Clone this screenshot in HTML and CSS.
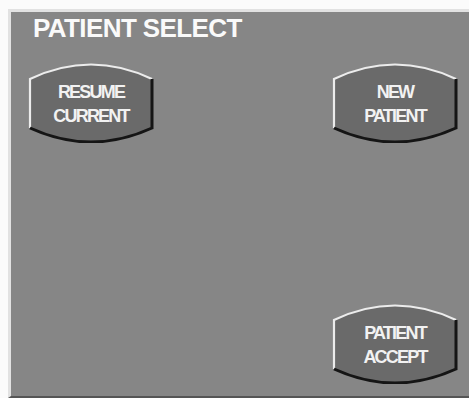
FILE: index.html
```html
<!DOCTYPE html>
<html>
<head>
<meta charset="utf-8">
<link rel="stylesheet" href="styles.css">
</head>
<body>
<div class="frame">
  <div class="panel">
    <h1 class="title">PATIENT SELECT</h1>
    <div class="row">
      <button class="btn" type="button">
        <svg class="btn-shape" viewBox="0 0 126 80" width="126" height="80">
          <path d="M2,16 Q63,-13 124,16 L124,65 Q63,93 2,65 Z" fill="#6a6a6a"/>
          <path d="M2,65 L2,16 Q63,-13 124,16" fill="none" stroke="#ececec" stroke-width="2.2"/>
          <path d="M124,16 L124,65 Q63,93 2,65" fill="none" stroke="#151515" stroke-width="3"/>
        </svg>
        <span class="btn-label">RESUME<br>CURRENT</span>
      </button>
      <button class="btn" type="button">
        <svg class="btn-shape" viewBox="0 0 126 80" width="126" height="80">
          <path d="M2,16 Q63,-13 124,16 L124,65 Q63,93 2,65 Z" fill="#6a6a6a"/>
          <path d="M2,65 L2,16 Q63,-13 124,16" fill="none" stroke="#ececec" stroke-width="2.2"/>
          <path d="M124,16 L124,65 Q63,93 2,65" fill="none" stroke="#151515" stroke-width="3"/>
        </svg>
        <span class="btn-label">NEW<br>PATIENT</span>
      </button>
    </div>
    <div class="bottom">
      <button class="btn" type="button">
        <svg class="btn-shape" viewBox="0 0 126 80" width="126" height="80">
          <path d="M2,16 Q63,-13 124,16 L124,65 Q63,93 2,65 Z" fill="#6a6a6a"/>
          <path d="M2,65 L2,16 Q63,-13 124,16" fill="none" stroke="#ececec" stroke-width="2.2"/>
          <path d="M124,16 L124,65 Q63,93 2,65" fill="none" stroke="#151515" stroke-width="3"/>
        </svg>
        <span class="btn-label">PATIENT<br>ACCEPT</span>
      </button>
    </div>
  </div>
</div>
</body>
</html>
```
FILE: styles.css
```css
html, body {
  margin: 0;
  padding: 0;
  background: #fbfbfb;
}
body {
  width: 469px;
  height: 398px;
  overflow: hidden;
  font-family: "Liberation Sans", Arial, sans-serif;
}
.frame {
  padding: 9px 0 0 8px;
  height: 389px;
}
.panel {
  box-sizing: border-box;
  height: 389px;
  border-top: 3px solid #e2e2e2;
  border-left: 3px solid #e2e2e2;
  border-bottom: 2px solid #555555;
  background: #868686;
  display: flex;
  flex-direction: column;
  padding: 3px 11px 12px 17px;
}
.title {
  margin: 0 0 0 5px;
  font-size: 26px;
  line-height: 26px;
  font-weight: bold;
  letter-spacing: -0.6px;
  color: #fafafa;
}
.row {
  display: flex;
  justify-content: space-between;
  margin-top: 22px;
}
.bottom {
  margin-top: auto;
  display: flex;
  justify-content: flex-end;
}
.btn {
  display: grid;
  width: 126px;
  height: 80px;
  padding: 0;
  margin: 0;
  border: 0;
  background: transparent;
  font-family: inherit;
}
.btn-shape {
  grid-area: 1 / 1;
  display: block;
}
.btn-label {
  grid-area: 1 / 1;
  align-self: center;
  justify-self: center;
  text-align: center;
  color: #f2f2f2;
  font-size: 18px;
  font-weight: bold;
  line-height: 24px;
  letter-spacing: -1.8px;
  padding-top: 1px;
}
```
